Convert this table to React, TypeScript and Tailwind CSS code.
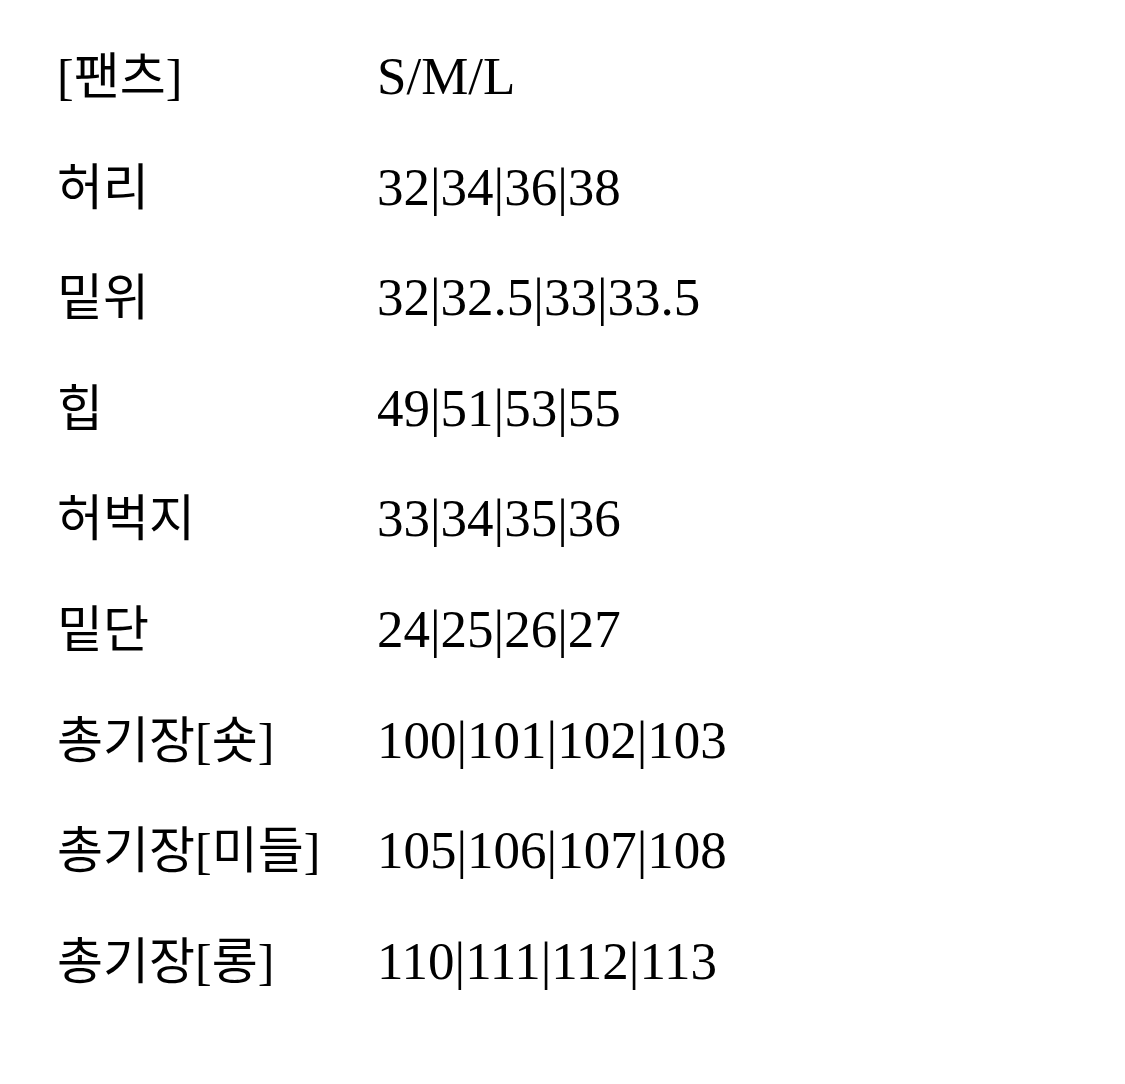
import React from 'react';

const rows: [string, string][] = [
  ['[팬츠]', 'S/M/L'],
  ['허리', '32|34|36|38'],
  ['밑위', '32|32.5|33|33.5'],
  ['힙', '49|51|53|55'],
  ['허벅지', '33|34|35|36'],
  ['밑단', '24|25|26|27'],
  ['총기장[숏]', '100|101|102|103'],
  ['총기장[미들]', '105|106|107|108'],
  ['총기장[롱]', '110|111|112|113'],
];

export default function App() {
  return (
    <div className="w-[1125px] h-[1084px] bg-white text-black pt-[21px] pl-[57px] font-['Liberation_Serif','Noto_Sans_CJK_KR',serif]">
      {rows.map(([label, value]) => (
        <div key={label} className="flex items-baseline h-[110.6px] leading-[110.6px] whitespace-nowrap">
          <div className="w-[320px] text-[50px]">{label}</div>
          <div className="text-[53px]">{value}</div>
        </div>
      ))}
    </div>
  );
}
